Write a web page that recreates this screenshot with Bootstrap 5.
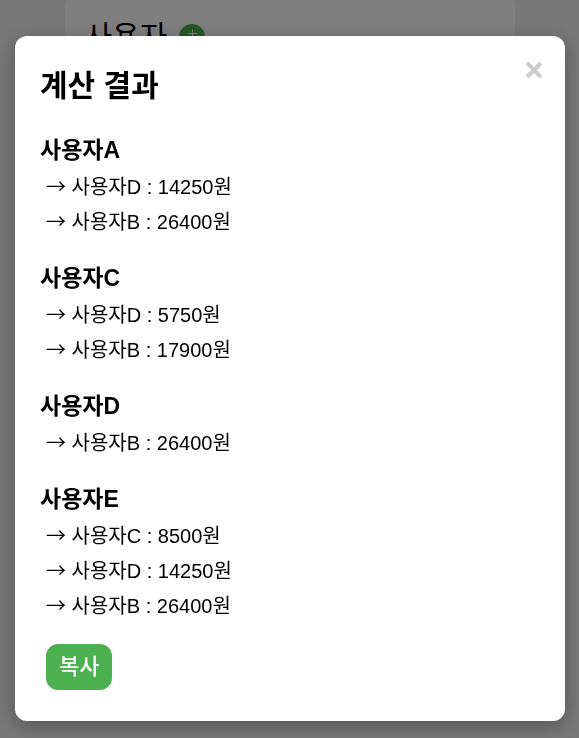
<!DOCTYPE html>
<html lang="ko">
<head>
<meta charset="utf-8">
<meta name="viewport" content="width=device-width, initial-scale=1">
<title>계산 결과</title>
<link rel="stylesheet" href="https://cdn.jsdelivr.net/npm/bootstrap@5.3.0/dist/css/bootstrap.min.css">
<style>
body { background: #f0f0f0; color: #000; font-family: "Liberation Sans", "Noto Sans CJK KR", sans-serif; overflow: hidden; }
.page-panel { max-width: 450px; min-height: 90vh; border-radius: 4px; padding: 16px 20px; }
.page-title { font-size: 30px; line-height: 42px; }
.add-btn { width: 26px; height: 26px; background: #4caf50; }
.overlay { background: rgba(0, 0, 0, .5); padding: 36px 14px 17px 15px; }
.overlay .modal-dialog { max-width: 640px; }
.overlay .modal-content { border-radius: 12px; padding: 25px; box-shadow: 0 5px 20px rgba(0, 0, 0, .3); color: #000; }
.result-head { margin-bottom: 20px; }
.result-title { font-size: 30px; line-height: 50px; }
.close-btn { width: 24px; height: 24px; margin: -3px -6px 0 0; color: #ccc; }
.result-group { margin-bottom: 19px; }
.result-name { font-size: 23px; line-height: 38px; padding-bottom: 1px; }
.result-list { font-size: 20px; line-height: 35px; padding-left: 6px; }
.result-list li { height: 35px; }
.arrow { font-family: "Noto Sans CJK KR", sans-serif; line-height: 1; }
.copy-btn { font-size: 22px; line-height: 32px; padding: 7px 13px; border-radius: 12px; margin-left: 6px; background: #4caf50; color: #fff; font-weight: 500; }
.copy-btn:hover { background: #449d48; color: #fff; }
.result-foot { padding: 1px 0 6px; }
</style>
<script src="https://cdn.jsdelivr.net/npm/bootstrap@5.3.0/dist/js/bootstrap.bundle.min.js" defer></script>
</head>
<body>
<main class="page-panel bg-white mx-auto">
  <div class="d-flex align-items-center">
    <h1 class="page-title fw-normal m-0 me-2 pe-1">사용자</h1>
    <button type="button" class="add-btn btn rounded-circle border-0 p-0 d-flex align-items-center justify-content-center" aria-label="사용자 추가">
      <svg width="9" height="9" viewBox="0 0 9 9" stroke="#fff" stroke-width="1" aria-hidden="true" class="mb-2"><path d="M4.500 0v9M0 4.500h9"/></svg>
    </button>
  </div>
</main>

<div class="overlay modal d-block" role="dialog" aria-modal="true" aria-labelledby="resultTitle">
  <div class="modal-dialog my-0 mx-auto">
    <div class="modal-content border-0">
      <div class="result-head d-flex justify-content-between align-items-start">
        <h2 id="resultTitle" class="result-title fw-bold m-0">계산 결과</h2>
        <button type="button" class="close-btn btn border-0 p-0 d-flex align-items-center justify-content-center" aria-label="닫기">
          <svg width="18" height="18" viewBox="0 0 18 18" stroke="currentColor" stroke-width="4" aria-hidden="true"><path d="M2 2l14 14M16 2L2 16"/></svg>
        </button>
      </div>
      <section class="result-group">
        <h3 class="result-name fw-bold m-0">사용자A</h3>
        <ul class="result-list list-unstyled m-0"><li><span class="arrow">→</span> 사용자D : 14250원</li><li><span class="arrow">→</span> 사용자B : 26400원</li></ul>
      </section>
      <section class="result-group">
        <h3 class="result-name fw-bold m-0">사용자C</h3>
        <ul class="result-list list-unstyled m-0"><li><span class="arrow">→</span> 사용자D : 5750원</li><li><span class="arrow">→</span> 사용자B : 17900원</li></ul>
      </section>
      <section class="result-group">
        <h3 class="result-name fw-bold m-0">사용자D</h3>
        <ul class="result-list list-unstyled m-0"><li><span class="arrow">→</span> 사용자B : 26400원</li></ul>
      </section>
      <section class="result-group">
        <h3 class="result-name fw-bold m-0">사용자E</h3>
        <ul class="result-list list-unstyled m-0"><li><span class="arrow">→</span> 사용자C : 8500원</li><li><span class="arrow">→</span> 사용자D : 14250원</li><li><span class="arrow">→</span> 사용자B : 26400원</li></ul>
      </section>
      <div class="result-foot"><button type="button" class="copy-btn btn border-0">복사</button></div>
    </div>
  </div>
</div>
</body>
</html>
